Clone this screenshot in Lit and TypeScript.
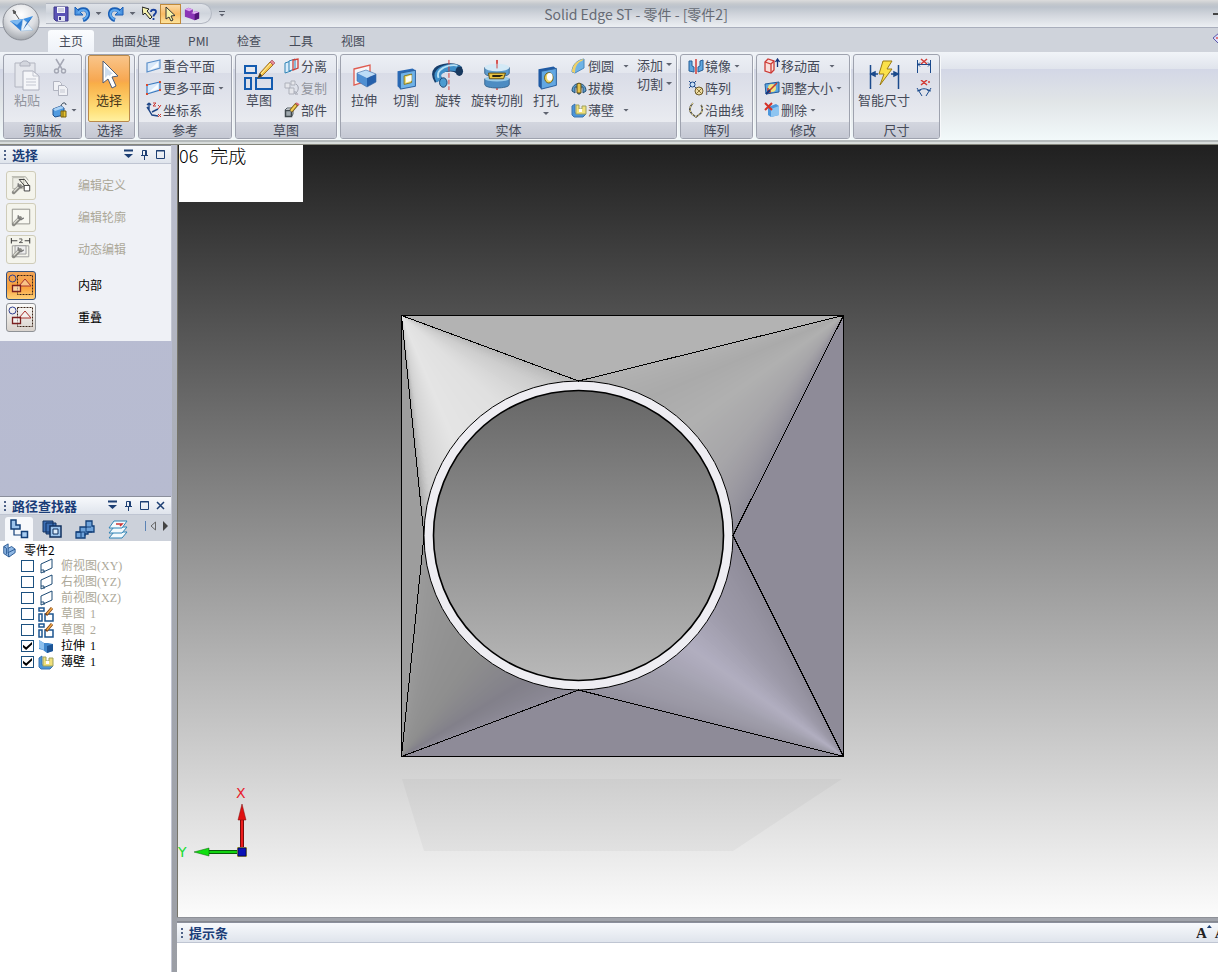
import { LitElement, html, svg, css, nothing } from "lit";
import { customElement, property, state } from "lit/decorators.js";
import { classMap } from "lit/directives/class-map.js";

/* ---------- icon drawings, each in its own view box ---------- */

const planeArt = (stroke: string) => svg`<path d="M1 5 14 2v8L1 14Z" fill="#d9e9fa" stroke=${stroke} stroke-width="1.200"/><path d="M3 12 12 4v5Z" fill="#fff" opacity=".8"/>`;

const pencil = svg`<path d="M-7 8-5 3 5-8 8-5-3 6Z" fill="#f6c64a" stroke="#8a5a12" stroke-width=".8"/><path d="M-7 8-5 3-3 6Z" fill="#333"/><path d="M5-8 7-10 10-7 8-5Z" fill="#e58a96" stroke="#a04452" stroke-width=".6"/><path d="M-4 4 6-7" stroke="#fff3b5"/>`;

const boxesArt = (c: string) => svg`<g fill="none" stroke=${c} stroke-width="2"><path d="M2 7h11v7H2Z"/><path d="M2 19h6v11H2Z"/><path d="M13 19h16v11H13Z"/></g>`;

const regionArt = svg`<circle cx="4.500" cy="4.500" r="3.500" fill="none" stroke="#2f3f8f"/><path d="M9.500 1.500h15v19h-15z" fill="none" stroke="#3a2418" stroke-dasharray="2 1"/><path d="M11 12 17 5l6 7Z" fill="#fff" fill-opacity=".35" stroke="#a8322e"/><path d="M4.500 11.500h8v6h-8z" fill="#fff" fill-opacity=".5" stroke="#7a1f1f" stroke-width="1.300"/>`;

const wrench = svg`<path d="M4 20 11 13" stroke="#8b8b85" stroke-width="4" stroke-linecap="round"/><path d="M4 19 10 13" stroke="#deded6" stroke-width="1.500"/><path d="M9 10v3l3 2 3-2" fill="none" stroke="#777" stroke-width="1.500"/>`;

const art: Record<string, { box: string; draw: unknown }> = {
  save: { box: "0 0 16 16", draw: svg`<path d="M1 1h14v14H3l-2-2Z" fill="#5b53b5" stroke="#3d3787"/><path d="M4 1h8v6H4Z" fill="#f4f5fb"/><path d="M5 3h6M5 5h6" stroke="#a8a8c8"/><path d="M5 10h7v5H5Z" fill="#dfe2f0"/><path d="M6 11h2v3H6Z" fill="#3d3787"/>` },
  undo: { box: "0 0 16 16", draw: svg`<path d="M3 7C6 2 13 2 14 7c.5 3-1.500 6-5 7" fill="none" stroke="#1a5fb6" stroke-width="4"/><path d="M1 1v8h8Z" fill="#4a93e0" stroke="#1a5fb6"/><path d="M4 7C7 3 12 3 13.500 7c.5 3-1.500 5-4 6.500" fill="none" stroke="#61aaf0" stroke-width="2"/>` },
  redo: { box: "0 0 16 16", draw: svg`<g transform="matrix(-1 0 0 1 16 0)"><path d="M3 7C6 2 13 2 14 7c.5 3-1.500 6-5 7" fill="none" stroke="#1a5fb6" stroke-width="4"/><path d="M1 1v8h8Z" fill="#4a93e0" stroke="#1a5fb6"/><path d="M4 7C7 3 12 3 13.500 7c.5 3-1.500 5-4 6.500" fill="none" stroke="#61aaf0" stroke-width="2"/></g>` },
  help: { box: "0 0 16 16", draw: svg`<path d="M0 1 7 3 5 5l5 6-2 2-5-6-2 2Z" fill="#f6f3b0" stroke="#222"/><path d="M9 6c0-3 5-3 5 0 0 2-2.500 2-2.500 4.500M11.500 12v2" fill="none" stroke="#173f9c" stroke-width="1.800"/>` },
  pick: { box: "0 0 16 16", draw: svg`<path d="M3 1v12l3-2 2 4 2-1-2-4 4-.5Z" fill="#f8f4a8" stroke="#333"/>` },
  part: { box: "0 0 18 16", draw: svg`<path d="M1 3l4-2 5 2v3l3-1 4 1v7l-5 2-5-2-6-2Z" fill="#8b34b6"/><path d="M1 3l4-2 5 2-4 2Z" fill="#dba0ee"/><path d="M8 7l5-2 4 1-5 2Z" fill="#e7b6f5"/><path d="M12 8l5-2v7l-5 2Z" fill="#531579"/>` },
  paste: { box: "0 0 28 32", draw: svg`<path d="M2 4h20v24H2Z" fill="#e4e6ec" stroke="#b2b5c0"/><path d="M7 5c0-2 2-1 3-3h4c1 2 3 1 3 3v2H7Z" fill="#d3d6de" stroke="#aeb1bd"/><path d="M10 12h10l6 5v14H10Z" fill="#f5f6f9" stroke="#adb0bd"/><path d="M20 12v5h6M13 20h10M13 23h10M13 26h10" fill="none" stroke="#c3c6d0"/>` },
  cut: { box: "0 0 16 16", draw: svg`<g fill="none" stroke="#a5a8b5" stroke-width="1.500"><path d="M4 1 10 11M12 1 6 11"/><circle cx="4.500" cy="13" r="2"/><circle cx="11.500" cy="13" r="2"/></g>` },
  copy: { box: "0 0 16 16", draw: svg`<g fill="#f0f1f5" stroke="#b1b4c0"><path d="M1.500 1.500h6l2 2v7h-8Z"/><path d="M6.500 5.500h6l3 3v7h-9Z"/></g><path d="M8 10h5M8 12h5" stroke="#c5c8d2"/>` },
  brush: { box: "0 0 16 16", draw: svg`<path d="M1 7l8-3 3 2v7l-9 2-2-2Z" fill="#4f9ae0" stroke="#1d4f8c"/><path d="M1 7l8-3 3 2-9 3Z" fill="#a8d1f5"/><path d="M9 4c1-4 5-4 5-1" fill="none" stroke="#345" /><path d="M9 9h5v6H9Z" fill="#e8c431" stroke="#77600e"/><path d="M11 9v6" stroke="#77600e"/>` },
  select: { box: "-1 0 22 32", draw: svg`<path d="M4 2v22l5-4 4 9 4-2-4-9 6-1Z" fill="#fff" stroke="#4e5d77"/><path d="M6 7v12l3-3 2 1 1-2 2 0Z" fill="#cddcee"/>` },
  plane: { box: "0 0 16 16", draw: planeArt("#5b8fc9") },
  planes: { box: "0 0 16 16", draw: svg`${planeArt("#3b7bc0")}<g fill="#dd4a2c"><path d="M0 4h2v2H0zM13 1h2v2h-2zM13 9h2v2h-2zM0 13h2v2H0z"/></g>` },
  axes: { box: "0 0 16 16", draw: svg`<g fill="none" stroke="#1d4586" stroke-width="1.400"><path d="M3 1v7l3 5 6 1M3 8 1 5M3 1 1 3M3 1l2 2M6 10l6-3"/></g><g stroke="#cc3b34" fill="none"><path d="M7 1h3L7 4h3M12 3l2 2M15 3l-3 4M12 12l3 3M15 12l-3 3"/></g>` },
  sketch: { box: "0 0 32 32", draw: svg`${boxesArt("#135bb0")}<g transform="translate(22 11)">${pencil}</g>` },
  split: { box: "0 0 16 16", draw: svg`<path d="M1 5l6-2v10l-6 2Z" fill="#d9ecfb" stroke="#2f83b5"/><path d="M5 3l6-2v10l-6 2Z" fill="#e7f3fc" stroke="#2f83b5"/><path d="M9 2l5-1v9l-5 2Z" fill="none" stroke="#cf4038" stroke-width="1.300"/>` },
  dup: { box: "0 0 16 16", draw: svg`<path d="M1 3h5v5H1zM5 8h5v6H5zM7 1h4v4H7z" fill="#e5e6eb" stroke="#aeb1bb"/><path d="M12 4c3 2 3 6 0 9M11 11v3h3" fill="none" stroke="#9fa2ae"/>` },
  comp: { box: "0 0 16 16", draw: svg`<path d="M1.500 8.500h6v6h-6z" fill="#9fa8ae" stroke="#3f474c" stroke-width="1.500"/><path d="M1 8l2-2h6v6l-1 2" fill="none" stroke="#525c62"/><path d="M7 9 13 2" stroke="#7b5a12" stroke-width="4"/><path d="M7 9 12 3" stroke="#f3cf58" stroke-width="2"/><path d="M12 1l3 2" stroke="#d86a7c" stroke-width="2"/>` },
  extrude: { box: "0 -3 32 32", draw: svg`<path d="M6 7 22 3v15L6 23Z" fill="#fff" fill-opacity=".6" stroke="#df5b50" stroke-width="1.300"/><path d="M9 11l9-3 10 4-9 4Z" fill="#bcdcf7"/><path d="M9 11v8l10 6v-9Z" fill="#4f8fd2"/><path d="M19 16l9-4v8l-9 5Z" fill="#2560ab"/><path d="M9 11l9-3 10 4v8l-9 5-10-6Z" fill="none" stroke="#3a68a4" stroke-width=".6"/>` },
  cutout: { box: "-1 -4 34 34", draw: svg`<path d="M7 9 23 6l3 2v17l-16 3-3-3Z" fill="#2a69b5"/><path d="M10 11 26 8v17l-16 3Z" fill="#6fb2e8" stroke="#2c5f9c"/><path d="M14 14l8-2v9l-8 2Z" fill="#f2e071" stroke="#83741f"/><path d="M16 15l6-2v6l-6 2Z" fill="#fdfdf3"/>` },
  revolve: { box: "0 0 34 34", draw: svg`<path d="M7 23C1 13 7 10 17 9c6-.5 9 0 12 3" fill="none" stroke="#173e6b" stroke-width="9"/><path d="M8 23C3 15 9 11 18 9c6-.5 8 0 11 2" fill="none" stroke="#3f8fc9" stroke-width="7"/><path d="M7 20C4 13 11 9 18 7c4-.7 7-.7 9 0" fill="none" stroke="#b8e1f5" stroke-width="2"/><ellipse cx="29" cy="13" rx="4" ry="5" fill="#17385e"/><ellipse cx="12" cy="25" rx="4" ry="5" fill="#4d9bd0" stroke="#173e6b"/><path d="M18 1v32" stroke="#d33b36" stroke-dasharray="5 2"/>` },
  revcut: { box: "0 0 32 34", draw: svg`<path d="M16 1v32" stroke="#d33b36" stroke-width="1.500"/><path d="M3 9v6c0 5 26 5 26 0V9Z" fill="#5c9acc" stroke="#39668f"/><path d="M3 21v6c0 5 26 5 26 0v-6Z" fill="#4d8cc2" stroke="#39668f"/><ellipse cx="16" cy="9" rx="13" ry="4" fill="#d3e9f6"/><ellipse cx="16" cy="21" rx="13" ry="3" fill="#9acae8"/><path d="M7 15h18l-2 6H8Z" fill="#e9c443" stroke="#5e4b0d"/><path d="M11 17h12l-4 2h-8Z" fill="#2a2410"/><path d="M16 1v9" stroke="#d33b36"/>` },
  hole: { box: "-2 -3 34 34", draw: svg`<path d="M7 8 23 5l3 2v18l-16 4-3-3Z" fill="#1f5aa4"/><path d="M10 10 26 7v18l-16 4Z" fill="#62a7e2" stroke="#2c5f9c"/><ellipse cx="18" cy="17" rx="4.500" ry="5.500" fill="#f0d666" stroke="#6d5d15"/><ellipse cx="19" cy="16" rx="3" ry="4" fill="#fff"/>` },
  round: { box: "0 0 16 16", draw: svg`<path d="M1 14C1 7 6 2 13 1v9l-9 5Z" fill="#6fb3e6" stroke="#4a88bd"/><path d="M1 14C1 7 6 2 13 1L11 3C7 4 4 8 4 15Z" fill="#efd068"/>` },
  draft: { box: "0 0 16 16", draw: svg`<path d="M1 11C1 1 15 1 15 11l-3 2V7h-2l-1 7H7L6 7H4v6Z" fill="#5d9ecf" stroke="#234e72"/><path d="M6 4l2-1 2 1v9H6Z" fill="#e6c44c" stroke="#5f4f18"/>` },
  shell: { box: "0 0 16 16", draw: svg`<path d="M1 4l3-2v9h9l2 1-3 3H3l-2-2Z" fill="#4a94d8" stroke="#3a74b0"/><path d="M5 3h3v4h3V4h4v8H5Z" fill="#f1e07a" stroke="#9da15e"/><path d="M8 7h3v3H8Z" fill="#fff"/>` },
  mirror: { box: "0 0 16 16", draw: svg`<path d="M1 3v10l5 1V9L4 8V3ZM15 2v10l-5 2V9l2-1V3Z" fill="#5fa7df" stroke="#265e98"/><path d="M8 1v15" stroke="#d33b36" stroke-width="1.500"/>` },
  pattern: { box: "0 0 16 16", draw: svg`<circle cx="4.500" cy="4.500" r="2.500" fill="#c7e0f8" stroke="#1f4b8c"/><path d="M1 1l2 2M8 1 6 3M1 8l2-2M8 8 6 6" stroke="#1f4b8c"/><circle cx="11" cy="11" r="4" fill="#eedca3" stroke="#6d5a2b"/><path d="M8 8l6 6M14 8l-6 6" stroke="#8c773d"/>` },
  curve: { box: "0 0 16 16", draw: svg`<path d="M5 1C1 5 1 9 4 12l4 3 5-4c2-3 2-5 0-8" fill="none" stroke="#4c4a42" stroke-width="1.500"/><path d="M5 1C1 5 1 9 4 12l4 3 5-4c2-3 2-5 0-8" fill="none" stroke="#f5e28b" stroke-dasharray="2 2"/>` },
  moveface: { box: "0 0 16 16", draw: svg`<path d="M1 4l3-3 6 2v9l-3 3-6-2Z" fill="#f9dedb" stroke="#cc3a35" stroke-width="1.300"/><path d="M1 4l6 2 3-3M7 6v9" fill="none" stroke="#cc3a35" stroke-width="1.300"/><path d="M13.500 9V2M11.500 4l2-3 2 3" fill="none" stroke="#16347b" stroke-width="1.300"/>` },
  resize: { box: "0 0 16 16", draw: svg`<path d="M1 4 15 2v10L2 14Z" fill="#5ca6e2" stroke="#235c99"/><circle cx="8" cy="8" r="4" fill="#f2e17b"/><path d="M4 12 13 3M4 12V8M4 12h3" stroke="#c83a2e" stroke-width="1.500" fill="none"/><path d="M2 14 6 10" stroke="#16347b" stroke-width="2"/>` },
  remove: { box: "0 0 16 16", draw: svg`<path d="M4 5l8-3 3 2v9l-8 2-3-2Z" fill="#4d97dc"/><path d="M7 7l8-3v9l-8 2Z" fill="#8ec5f1"/><path d="M1 1l7 7M8 1 1 8" stroke="#d4332a" stroke-width="2"/>` },
  smart: { box: "0 0 32 32", draw: svg`<path d="M2.500 6v24M30.500 6v24" stroke="#1b4a8c" stroke-width="1.500"/><path d="M3 15h7M30 15h-7M3 15l4-2v4ZM30 15l-4-2v4Z" stroke="#1b4a8c" fill="#1b4a8c" stroke-width="1.500"/><path d="M15 2h9l-5 8h5L12 26l4-11h-5Z" fill="#fbe14a" stroke="#9c7c15"/>` },
  dimgap: { box: "0 0 16 16", draw: svg`<path d="M1.500 2v13M14.500 2v13M2 6.500h12M2 6.500l2-2M2 6.500l2 2M14 6.500l-2-2M14 6.500l-2 2" fill="none" stroke="#1b4a8c"/><path d="M5 1l6 5M11 1 5 6" stroke="#d33b36" stroke-width="1.500"/>` },
  dimang: { box: "0 0 16 16", draw: svg`<path d="M1 8l5 8M15 8l-5 8M2 11c4-3 8-3 12 0M1 11l4-1M15 11l-4-1" fill="none" stroke="#1b4a8c"/><path d="M5 0l6 5M11 0 5 5M13 1v2" stroke="#d33b36" stroke-width="1.500"/>` },
  editdef: { box: "0 0 24 24", draw: svg`<path d="M2 3h15l3 4" fill="none" stroke="#a2a29a"/><path d="M3 4h12v12H3Z" fill="#eeeee6" stroke="#b7b7ac"/><path d="M10 6h6l5 7M10 6l6 7" fill="none" stroke="#333"/><path d="M15.500 12.500h6v6h-6z" fill="#fff" stroke="#333"/>${wrench}` },
  editprof: { box: "0 0 24 24", draw: svg`<path d="M2.500 3.500h19v16h-19z" fill="#f8f8f1" stroke="#8d8d86"/>${wrench}` },
  dynedit: { box: "0 0 24 24", draw: svg`<path d="M1.500 0v6M21.500 0v6M2 3h6M16 3h6" stroke="#444" stroke-width="1.200"/><path d="M10 1h3v2l-3 2h4" fill="none" stroke="#555"/><path d="M2.500 8.500h18v12h-18z" fill="none" stroke="#999"/><path d="M5.500 8.500h12v9h-12z" fill="#eee" stroke="#999"/>${wrench}` },
  region: { box: "0 0 26 22", draw: regionArt },
  solid: { box: "0 0 16 16", draw: svg`<path d="M2 4 7 1v5l4-2 4 3v4l-7 5-6-4Z" fill="#90b8e4" stroke="#1d4f8c"/><path d="M7 6v5l1 5M7 11l8-4M2 4l3 2v7" fill="none" stroke="#1d4f8c"/>` },
  refplane: { box: "0 0 16 16", draw: svg`<path d="M3 6 14 1v9L3 15Z" fill="#fff" stroke="#1c4a74"/><path d="M3 12h3v3" fill="none" stroke="#1c4a74"/>` },
  sketchrow: { box: "0 0 16 16", draw: svg`<g fill="none" stroke="#1c5690" stroke-width="1.500"><path d="M1 2h5v3H1zM1 8h3v7H1zM7 8h8v7H7z"/></g><path d="M8 9 14 2" stroke="#7c3f12" stroke-width="3"/><path d="M9 8 14 2" stroke="#f0a94a" stroke-width="1.500"/>` },
  extrow: { box: "0 0 16 16", draw: svg`<path d="M1 2l5 3h4l5 1v7l-6 2-4-3-4-1Z" fill="#3f86cc"/><path d="M1 2l5 3v7l-5-2Z" fill="#8cc0ee"/><path d="M9 8l6-2v7l-6 2Z" fill="#1d5596"/>` },
  dockTree: { box: "0 0 20 20", draw: svg`<path d="M2 1h5v5h4v4H2Z" fill="#9cc4ec" stroke="#123f78" stroke-width="1.500"/><path d="M5 10v6h7" fill="none" stroke="#123f78" stroke-width="1.200"/><path d="M12.500 12.500h6v6h-6z" fill="#a8cdf2" stroke="#123f78" stroke-width="1.500"/>` },
  dockLayer: { box: "0 0 20 20", draw: svg`<path d="M1 2h10v11H1zM4 4h10v11H4z" fill="#3c6fb4" stroke="#10305f"/><path d="M8 7h11v11H8Z" fill="#9cc4ec" stroke="#10305f" stroke-width="1.500"/><path d="M11 10h5v5h-5Z" fill="#dcecfa" stroke="#10305f"/>` },
  dockFam: { box: "0 0 20 20", draw: svg`<path d="M11 2h6v5h2v6h-6v2h-3v4H1v-6h4V8h6Z" fill="#6fa3da" stroke="#123f78" stroke-width="1.300"/><path d="M11 8v5h6M6 13v5M11 8h5M1 13h9v4" fill="none" stroke="#123f78"/>` },
  dockSheet: { box: "0 0 20 20", draw: svg`<g fill="#f3fafd" stroke="#2f83b5"><path d="M1 19l5-6h13l-5 6Z"/><path d="M1 14l5-6h13l-5 6Z"/><path d="M1 9l5-7h13l-5 7Z"/></g><path d="M8 5h6l-2 2" fill="none" stroke="#c33" stroke-width="1.500"/>` },
};

const icon = (name: string, cls: string) =>
  html`<svg class=${cls} viewBox=${art[name].box} aria-hidden="true">${art[name].draw}</svg>`;

/* ---------- ribbon contents ---------- */

interface Cmd { icon?: string; label: string; menu?: "near" | "apart"; off?: boolean; on?: boolean; bare?: boolean }
type Block = { big: Cmd } | { stack: Cmd[] };
interface Group { title: string; blocks: Block[]; cls?: string }

const groups: Group[] = [
  { title: "剪贴板", blocks: [
    { big: { icon: "paste", label: "粘贴", off: true } },
    { stack: [{ icon: "cut", label: "剪切", bare: true, off: true }, { icon: "copy", label: "复制", bare: true, off: true }, { icon: "brush", label: "格式刷", bare: true, menu: "near" }] },
  ] },
  { title: "选择", blocks: [{ big: { icon: "select", label: "选择", on: true } }] },
  { title: "参考", cls: "inset", blocks: [
    { stack: [{ icon: "plane", label: "重合平面" }, { icon: "planes", label: "更多平面", menu: "near" }, { icon: "axes", label: "坐标系" }] },
  ] },
  { title: "草图", blocks: [
    { big: { icon: "sketch", label: "草图" } },
    { stack: [{ icon: "split", label: "分离" }, { icon: "dup", label: "复制", off: true }, { icon: "comp", label: "部件" }] },
  ] },
  { title: "实体", blocks: [
    { big: { icon: "extrude", label: "拉伸" } },
    { big: { icon: "cutout", label: "切割" } },
    { big: { icon: "revolve", label: "旋转" } },
    { big: { icon: "revcut", label: "旋转切削" } },
    { big: { icon: "hole", label: "打孔", menu: "near" } },
    { stack: [{ icon: "round", label: "倒圆", menu: "apart" }, { icon: "draft", label: "拔模" }, { icon: "shell", label: "薄壁", menu: "apart" }] },
    { stack: [{ label: "添加", menu: "near" }, { label: "切割", menu: "near" }] },
  ] },
  { title: "阵列", cls: "inset", blocks: [
    { stack: [{ icon: "mirror", label: "镜像", menu: "near" }, { icon: "pattern", label: "阵列" }, { icon: "curve", label: "沿曲线" }] },
  ] },
  { title: "修改", cls: "inset", blocks: [
    { stack: [{ icon: "moveface", label: "移动面", menu: "apart" }, { icon: "resize", label: "调整大小", menu: "near" }, { icon: "remove", label: "删除", menu: "near" }] },
  ] },
  { title: "尺寸", blocks: [
    { big: { icon: "smart", label: "智能尺寸" } },
    { stack: [{ icon: "dimgap", label: "间距", bare: true }, { icon: "dimang", label: "夹角", bare: true }] },
  ] },
];

@customElement("ribbon-group")
class RibbonGroup extends LitElement {
  @property({ attribute: false }) group!: Group;

  static styles = css`
    :host { display: flex; flex-direction: column; border: 1px solid #9ea2ae; border-radius: 3px; overflow: hidden;
      background: linear-gradient(#eceff5 0, #e3e6ee 18px, #d9dce7 18px, #e9ebf0 66px); box-shadow: 1px 1px 0 #f7f9fb; }
    .body { display: flex; flex: 1; padding-left: 2px; }
    .body.inset { padding-left: 3px; }
    h2 { margin: 0; height: 16px; font: 400 13px/15px "Noto Sans CJK SC", sans-serif; text-align: center; color: #454a58;
      background: linear-gradient(#d3d6df, #c5c8d3); }
    button { appearance: none; border: 1px solid transparent; background: none; margin: 0; padding: 0; color: #454a58;
      font: 400 13px/18px "Noto Sans CJK SC", sans-serif; white-space: nowrap; }
    button:disabled { color: #93969f; }
    .big { display: flex; flex-direction: column; align-items: center; min-width: 42px; padding: 3px 1px 0; }
    .big.on { border-color: #b98a4b; border-radius: 2px; color: #4a3a1c;
      background: linear-gradient(#f9c58a 0, #f7a750 38%, #f9ae48 42%, #ffe27c 85%, #fff0a0 100%); }
    .bigicon { width: 32px; height: 32px; }
    .stack { display: flex; flex-direction: column; align-items: flex-start; padding-left: 3px; }
    .small { display: flex; align-items: center; height: 22px; gap: 1px; }
    .stack.bare-text { padding-left: 6px; }
    .stack.bare-text .small { height: 19px; }
    .smallicon { width: 16px; height: 16px; }
    .caret { width: 6px; height: 3px; background: #5f6470; clip-path: polygon(0 0, 100% 0, 50% 100%); margin-left: 2px; }
    .caret.apart { margin-left: 8px; }
    .big .caret { margin: 3px 0 0; }
  `;

  private small(c: Cmd) {
    return html`<button class="small" ?disabled=${c.off} aria-label=${c.label}>
      ${c.icon ? icon(c.icon, "smallicon") : nothing}
      ${c.bare ? nothing : html`<span>${c.label}</span>`}
      ${c.menu ? html`<span class=${classMap({ caret: true, apart: c.menu === "apart" })}></span>` : nothing}
    </button>`;
  }

  private block(b: Block) {
    if ("big" in b) {
      const c = b.big;
      return html`<button class=${classMap({ big: true, on: !!c.on })} ?disabled=${c.off}>
        ${icon(c.icon!, "bigicon")}<span>${c.label}</span>${c.menu ? html`<span class="caret"></span>` : nothing}
      </button>`;
    }
    return html`<div class=${classMap({ stack: true, "bare-text": !b.stack[0].icon })}>${b.stack.map((c) => this.small(c))}</div>`;
  }

  render() {
    return html`<div class="body ${this.group.cls ?? ""}">${this.group.blocks.map((b) => this.block(b))}</div><h2>${this.group.title}</h2>`;
  }
}

/* ---------- 3D model: square base blended into a round collar ---------- */

type Point = [number, number];
type Rgb = [number, number, number];
const centre: Point = [400.5, 390.5];
const outer = 154.5;
const inner = 145;
const corners: Point[] = [[665.5, 170.5], [665.5, 611.5], [223.5, 611.5], [223.5, 170.5]];

/* Shade stops along each corner cone, clockwise by angle. */
const cones: { apex: Point; from: number; stops: [number, Rgb][] }[] = [
  { apex: corners[0], from: -90, stops: [[0, [179, 179, 179]], [0.3, [170, 170, 170]], [0.5, [176, 176, 176]], [0.72, [166, 165, 168]], [1, [142, 139, 152]]] },
  { apex: corners[1], from: 0, stops: [[0, [142, 139, 152]], [0.3, [156, 153, 168]], [0.5, [177, 174, 192]], [0.7, [160, 158, 171]], [1, [146, 143, 156]]] },
  { apex: corners[2], from: 90, stops: [[0, [142, 139, 152]], [0.22, [130, 128, 138]], [0.45, [142, 142, 142]], [0.7, [148, 148, 148]], [1, [156, 156, 156]]] },
  { apex: corners[3], from: 180, stops: [[0, [160, 160, 160]], [0.18, [208, 208, 208]], [0.4, [229, 229, 229]], [0.65, [224, 224, 224]], [0.85, [205, 205, 205]], [1, [181, 181, 181]]] },
];

const onCircle = (deg: number): Point => [
  centre[0] + outer * Math.cos((deg * Math.PI) / 180),
  centre[1] + outer * Math.sin((deg * Math.PI) / 180),
];

const shadeAt = (stops: [number, Rgb][], t: number) => {
  const i = Math.max(1, stops.findIndex((s) => s[0] >= t));
  const [a, ca] = stops[i - 1];
  const [b, cb] = stops[i];
  const k = (t - a) / (b - a);
  return `rgb(${ca.map((v, n) => Math.round(v + (cb[n] - v) * k)).join(",")})`;
};

const SLICES = 90;
const coneFaces = cones.flatMap((c) =>
  Array.from({ length: SLICES }, (_, i) => {
    const p = onCircle(c.from + (i * 90) / SLICES);
    const q = onCircle(c.from + (Math.min(SLICES, i + 1.5) * 90) / SLICES);
    return svg`<polygon points="${c.apex.join()} ${p.join()} ${q.join()}" fill=${shadeAt(c.stops, (i + 0.5) / SLICES)}></polygon>`;
  }));

const [tr, br, bl, tl] = corners.map((c) => c.join());
const [east, south, west, north] = [0, 90, 180, 270].map((d) => onCircle(d).join());

const scene = svg`
  <defs>
    <mask id="bore"><rect width="100%" height="100%" fill="#fff"/><circle cx=${centre[0]} cy=${centre[1]} r=${inner} fill="#000"/></mask>
    <linearGradient id="reflection" x1="0" y1="0" x2="0" y2="1"><stop offset="0" stop-color="#cecece"/><stop offset="1" stop-color="#e1e1e1"/></linearGradient>
  </defs>
  <polygon points="224,634 664,634 555,706 246,706" fill="url(#reflection)"/>
  <g mask="url(#bore)" shape-rendering="crispEdges">
    <polygon points="${tl} ${tr} ${north}" fill="#b3b3b3"/>
    <polygon points="${tr} ${br} ${east}" fill="#8e8b98"/>
    <polygon points="${br} ${bl} ${south}" fill="#8e8b98"/>
    <polygon points="${bl} ${tl} ${west}" fill="#9d9d9d"/>
    ${coneFaces}
    <circle cx=${centre[0]} cy=${centre[1]} r=${outer} fill="#eeedf2"/>
  </g>
  <g fill="none" stroke="#000" shape-rendering="crispEdges">
    <polygon points="${tl} ${tr} ${br} ${bl}"/>
    <polyline points="${tl} ${north} ${tr} ${east} ${br} ${south} ${bl} ${west} ${tl}"/>
  </g>
  <g fill="none" stroke="#000">
    <circle cx=${centre[0]} cy=${centre[1]} r=${outer}/>
    <circle cx=${centre[0]} cy=${centre[1]} r=${inner} stroke-width="1.600"/>
  </g>
  <g>
    <path d="M64 706V674" stroke="#7a0c0c" stroke-width="4"/><path d="M64 706V674" stroke="#ee1c1c" stroke-width="2"/>
    <path d="M64 659 60 675h8Z" fill="#e01010" stroke="#7a0c0c" stroke-width=".5"/>
    <path d="M60 707H30" stroke="#0a5c0a" stroke-width="4"/><path d="M60 707H30" stroke="#12d412" stroke-width="2"/>
    <path d="M16 707 31 703v8Z" fill="#10e010" stroke="#0a5c0a" stroke-width=".5"/>
    <path d="M59 702h10v10H59Z" fill="#c9c24a"/><path d="M60 703h8v8h-8Z" fill="#0a12b8" stroke="#06085c"/>
  </g>
  <g class="axis"><text x="58" y="653" fill="#e8202c">X</text><text x="0" y="712" fill="#20dc30">Y</text></g>`;

/* ---------- tree ---------- */

interface Node { icon: string; label: string; note: string; shown: boolean }
const features: Node[] = [
  { icon: "refplane", label: "俯视图", note: "(XY)", shown: false },
  { icon: "refplane", label: "右视图", note: "(YZ)", shown: false },
  { icon: "refplane", label: "前视图", note: "(XZ)", shown: false },
  { icon: "sketchrow", label: "草图", note: "1", shown: false },
  { icon: "sketchrow", label: "草图", note: "2", shown: false },
  { icon: "extrow", label: "拉伸", note: "1", shown: true },
  { icon: "shell", label: "薄壁", note: "1", shown: true },
];

const paneGlyphs: Record<string, unknown> = {
  menu: svg`<path d="M1 1.500h9" stroke="#1d3f73" stroke-width="2"/><path d="M1 5h9L5.500 9Z" fill="#1d3f73"/>`,
  pin: svg`<path d="M3.500 6V1.500h4V6M2 6.500h7M5.500 7v4M6.500 2v4" fill="none" stroke="#1d3f73"/>`,
  max: svg`<path d="M1.500 1.500h8v8h-8zM1 2h9" fill="none" stroke="#1d3f73"/>`,
  close: svg`<path d="M2 2l7 7M9 2 2 9" stroke="#1d3f73" stroke-width="1.500"/>`,
};
const paneNames: Record<string, string> = { menu: "选项", pin: "自动隐藏", max: "最大化", close: "关闭" };

@customElement("app-root")
class AppRoot extends LitElement {
  @state() private nodes = features;

  static styles = css`
    :host { display: flex; flex-direction: column; min-height: 100vh; overflow: hidden; background: #b9bccf;
      font: 12px/16px "Noto Sans CJK SC", sans-serif; color: #000; }
    * { box-sizing: border-box; }
    button { appearance: none; border: 0; background: none; margin: 0; padding: 0; font: inherit; color: inherit; }
    h1, h2 { margin: 0; font: inherit; }

    .top { position: relative; }
    .titlebar { display: grid; grid-template-columns: 1fr auto 1fr; align-items: center; height: 27px; padding-left: 46px;
      background: linear-gradient(#dcdcdc 0, #c4c8cd 4px, #bcc3cc 7px, #d2d6dd 15px, #eceff3 27px); }
    .title { padding-left: 8px; font: 14px/16px "Noto Sans CJK SC", sans-serif; color: #666b74; }
    .titlebar .end { justify-self: end; width: 5px; height: 2px; background: #444; }
    .quick { display: flex; align-items: center; }
    .pill { display: flex; align-items: center; height: 21px; width: 166px; padding: 0 3px 0 4px; border: 1px solid #b3b8c2;
      border-left: 0; border-radius: 0 11px 11px 0; background: linear-gradient(#dfe2e8, #cfd4dc 50%, #e6e9ee); }
    .pill button { display: flex; align-items: center; justify-content: center; width: 21px; height: 20px; }
    .pill .drop { width: 13px; }
    .pill .on { border: 1px solid #c08a3a; background: linear-gradient(#fbd9a6, #f9bb62 50%, #fde39a); }
    .qicon { width: 16px; height: 16px; }
    .caret { display: block; width: 6px; height: 3px; background: #5f6470; clip-path: polygon(0 0, 100% 0, 50% 100%); }
    .more { margin-left: 7px; border-top: 1px solid #555a66; padding: 2px 0 0; }
    .orb { position: absolute; left: 2px; top: 3px; width: 38px; height: 38px; }
    .orb svg { display: block; width: 38px; height: 38px; }

    .tabs { display: flex; align-items: flex-end; gap: 6px; height: 25px; padding-left: 48px; border-top: 1px solid #a9aebc; background: #cfd3db; color: #454a58; }
    .tabs button { height: 22px; padding: 0 11px; line-height: 20px; }
    .tabs .on { background: linear-gradient(#fbfdff, #eef2f8); border-radius: 3px 3px 0 0; margin-right: 1px; }
    .tabs .close { margin-left: auto; padding: 0; width: 6px; }
    .tabs .close svg { width: 6px; height: 14px; }

    .ribbon { display: grid; grid-template-columns: 79px 50px 94px 102px 337px 73px 94px 87px; gap: 3px; height: 88px; padding: 2px 0 1px 3px;
      background: linear-gradient(#f1f4f8 0, #e0e4ec 17px, #d3d7e6 17px, #e1e5e7 50px, #f2f9fa 88px); }
    .edge { height: 5px; border-top: 2px solid #b5babb; border-bottom: 1px solid #85867c; background: #d8dcdb; }

    .work { display: grid; grid-template-columns: 172px 5px minmax(0, 1fr); flex: 1; }
    .dock { display: flex; flex-direction: column; background: linear-gradient(#b9bdd3, #b4b8cc); }
    .sash { background: linear-gradient(#bdc0d0, #a7abb3 45%, #9b9ea5); }
    .dock section { border-right: 1px solid #c3c6d3; }
    .finder { display: flex; flex-direction: column; flex: 1; }
    .gap { height: 155px; }
    .pane { display: flex; align-items: center; height: 19px; padding: 0 5px 0 4px; gap: 4px; border-top: 1px solid #8b8f9c; border-bottom: 1px solid #bfc5d2;
      background: linear-gradient(#f7f9fc, #dfe4ec); color: #1b3d78; }
    .pane h2 { flex: 1; font-weight: 700; font-size: 13px; line-height: 17px; padding-left: 2px; }
    .pane button { display: flex; width: 12px; height: 12px; align-items: center; justify-content: center; }
    .pane svg { width: 11px; height: 11px; }
    .grip { width: 2px; height: 10px; background: repeating-linear-gradient(#4e6187 0 2px, transparent 2px 4px); }

    .opts { background: #eff1f6; padding: 5px 0 8px 6px; }
    .opt { display: flex; align-items: center; gap: 42px; height: 32px; }
    .opt:disabled { color: #aca899; }
    .opt.later { margin-top: 4px; }
    .key { display: flex; align-items: center; justify-content: center; width: 30px; height: 29px; border: 1px solid #cfccb9; border-radius: 3px; background: #f4f4ec; }
    .key svg { width: 26px; height: 22px; }
    .on .key { border-color: #34507c; background: linear-gradient(#f2a457, #f9a33f 60%, #ffd27a); }
    .up .key { border-color: #8f9296; background: linear-gradient(#fbfaf8, #d9d3cd); }

    .docktabs { display: flex; align-items: flex-end; height: 26px; padding-left: 5px; gap: 5px; background: #ccd1da; }
    .docktabs button { display: flex; align-items: center; justify-content: center; width: 28px; height: 24px; }
    .docktabs .on { background: #f6f8fb; border-radius: 3px 3px 0 0; }
    .docktabs svg { width: 20px; height: 20px; }
    .docktabs .nav { width: 27px; margin-left: auto; }
    .docktabs .nav svg { width: 27px; height: 18px; }
    .tree { flex: 1; background: #fff; margin: 0; padding: 1px 0 0; list-style: none; }
    .root { display: flex; align-items: center; gap: 8px; height: 16px; padding-left: 2px; }
    .root svg, .node svg { width: 16px; height: 16px; flex: none; }
    .root svg { width: 14px; }
    .node label { display: flex; align-items: center; height: 16px; padding-left: 21px; gap: 4px; color: #aca899; }
    .node.shown label { color: #000; }
    .node span { padding-left: 3px; font-family: "Liberation Serif", "Noto Sans CJK SC", serif; line-height: 18px; white-space: pre; }
    .node span.count { padding-left: 2px; }
    .node input { appearance: none; display: block; margin: 0; width: 13px; height: 12px; border: 1px solid #1c5180; background: #fff; }
    .node input:checked::before { content: ""; display: block; width: 9px; height: 8px; margin: 1px;
      background: #000; clip-path: polygon(0 35%, 35% 65%, 100% 0, 100% 30%, 35% 100%, 0 65%); }

    .main { display: flex; flex-direction: column; }
    .view { position: relative; flex: 1; border-left: 1px solid #77756a; background: linear-gradient(#202020, #fcfcfc); }
    .view > svg { position: absolute; inset: 0; width: 100%; height: 100%; overflow: visible; }
    .axis { font: 14px "DejaVu Sans", sans-serif; }
    .note { position: relative; display: flex; gap: 12px; width: 124px; height: 57px; margin-left: 1px; background: #fff;
      font: 300 18px/20px "Noto Sans CJK SC", sans-serif; }
    .bar { height: 5px; background: #a1a4ac; border-top: 1px solid #8e9198; border-bottom: 1px solid #85888f; }
    .prompt .pane { height: 21px; padding-right: 0; }
    .prompt .pane .fonts { width: 22px; height: 18px; gap: 3px; justify-content: flex-start; overflow: hidden;
      font: 700 15px/18px "Liberation Serif", serif; color: #222; }
    .fonts i { flex: none; width: 5px; height: 3px; margin: 0 0 12px -3px; background: #1d3f73; clip-path: polygon(50% 0, 100% 100%, 0 100%); }
    .message { height: 29px; background: #fff; }
  `;

  private toggle(i: number) {
    this.nodes = this.nodes.map((n, k) => (k === i ? { ...n, shown: !n.shown } : n));
  }

  private pane(title: string, keys: string[]) {
    return html`<div class="pane"><span class="grip"></span><h2>${title}</h2>
      ${keys.map((k) => html`<button aria-label=${paneNames[k]}><svg viewBox="0 0 11 11">${paneGlyphs[k]}</svg></button>`)}</div>`;
  }

  private quick(name: string, label: string, on = false) {
    return html`<button class=${classMap({ on })} aria-label=${label}>${icon(name, "qicon")}</button>`;
  }

  private opt(name: string, label: string, cls: string, off = false) {
    return html`<button class="opt ${cls}" ?disabled=${off}><span class="key">${icon(name, "")}</span><span>${label}</span></button>`;
  }

  render() {
    return html`
      <header class="top">
        <div class="titlebar">
          <div class="quick">
            <div class="pill">
              ${this.quick("save", "保存")}${this.quick("undo", "撤消")}
              <button class="drop" aria-label="撤消列表"><span class="caret"></span></button>
              ${this.quick("redo", "重做")}
              <button class="drop" aria-label="重做列表"><span class="caret"></span></button>
              ${this.quick("help", "帮助")}${this.quick("pick", "选择", true)}${this.quick("part", "零件")}
            </div>
            <button class="more" aria-label="自定义"><span class="caret"></span></button>
          </div>
          <h1 class="title">Solid Edge ST - 零件 - [零件2]</h1>
          <span class="end"></span>
        </div>
        <nav class="tabs">
          <button class="on">主页</button><button>曲面处理</button><button>PMI</button><button>检查</button><button>工具</button><button>视图</button>
          <button class="close" aria-label="样式"><svg viewBox="0 0 6 14"><path d="M7 1 1 6l6 6" fill="#dcdcf8" stroke="#5a57a8"/><circle cx="5" cy="6" r="1" fill="#d55"/></svg></button>
        </nav>
        <button class="orb" aria-label="应用程序">
          <svg viewBox="0 0 38 38">
            <defs><radialGradient id="orb" cx=".5" cy=".3" r=".7"><stop offset="0" stop-color="#fff"/><stop offset=".6" stop-color="#dcdee2"/><stop offset="1" stop-color="#a3a7ad"/></radialGradient></defs>
            <circle cx="19" cy="19" r="18" fill="url(#orb)" stroke="#8b8f97"/>
            <path d="M8 18 21 16l-2 12Z" fill="#2f7fd6"/><path d="M8 18 21 16l-6 6Z" fill="#7db8f0"/>
            <path d="M21 16l10-3-5 7Z" fill="#3f92e4"/><path d="M21 16l-2 12 12-1Z" fill="#e8f2fb" stroke="#8ab4dc" stroke-width=".5"/><path d="M31 13l-7 8-3 6Z" fill="#1e5fb0"/>
            <path d="M11 7l6 9M11 7l1 4 2-2Z" stroke="#555" fill="#555"/>
          </svg>
        </button>
      </header>
      <div class="ribbon">${groups.map((g) => html`<ribbon-group .group=${g}></ribbon-group>`)}</div>
      <div class="edge"></div>
      <div class="work">
        <aside class="dock">
          <section>
            ${this.pane("选择", ["menu", "pin", "max"])}
            <div class="opts">
              ${this.opt("editdef", "编辑定义", "", true)}
              ${this.opt("editprof", "编辑轮廓", "", true)}
              ${this.opt("dynedit", "动态编辑", "", true)}
              ${this.opt("region", "内部", "on later")}
              ${this.opt("region", "重叠", "up")}
            </div>
          </section>
          <div class="gap"></div>
          <section class="finder">
            ${this.pane("路径查找器", ["menu", "pin", "max", "close"])}
            <div class="docktabs">
              <button class="on" aria-label="路径查找器">${icon("dockTree", "")}</button>
              <button aria-label="图层">${icon("dockLayer", "")}</button>
              <button aria-label="零件族">${icon("dockFam", "")}</button>
              <button aria-label="图纸">${icon("dockSheet", "")}</button>
              <button class="nav" aria-label="更多"><svg viewBox="0 0 27 18"><path d="M1.500 1v10" stroke="#5b83b5"/><path d="M11.500 2v8L7 6Z" fill="none" stroke="#666"/><path d="M19 1v10l5-5Z" fill="#444"/></svg></button>
            </div>
            <ul class="tree">
              <li class="root">${icon("solid", "")}<span>零件2</span></li>
              ${this.nodes.map((n, i) => html`<li class=${classMap({ node: true, shown: n.shown })}>
                <label><input type="checkbox" .checked=${n.shown} @change=${() => this.toggle(i)} />${icon(n.icon, "")}<span>${n.label}${n.note.length > 1 ? n.note : html`<span class="count"> ${n.note}</span>`}</span></label>
              </li>`)}
            </ul>
          </section>
        </aside>
        <div class="sash"></div>
        <main class="main">
          <div class="view">
            <svg aria-label="模型视图">${scene}</svg>
            <div class="note"><span>06</span><span>完成</span></div>
          </div>
          <div class="bar"></div>
          <section class="prompt">
            <div class="pane"><span class="grip"></span><h2>提示条</h2><button class="fonts" aria-label="字体大小"><span>A</span><i></i><span>A</span></button></div>
            <div class="message"></div>
          </section>
        </main>
      </div>`;
  }
}
